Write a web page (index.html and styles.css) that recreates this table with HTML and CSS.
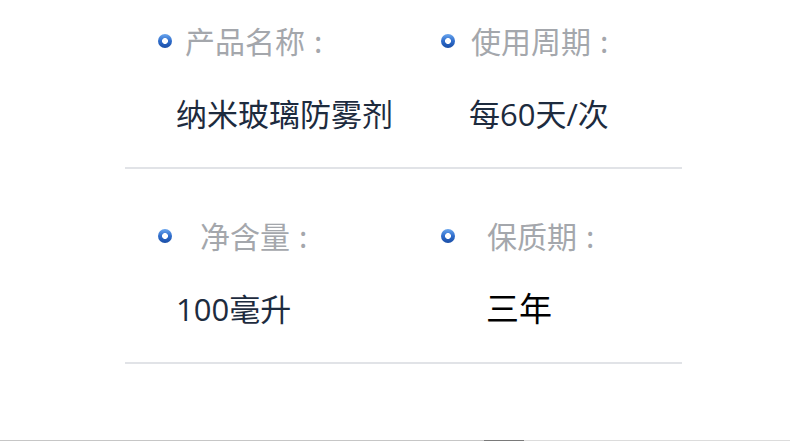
FILE: index.html
```html
<!DOCTYPE html>
<html lang="zh">
<head>
<meta charset="utf-8">
<link rel="stylesheet" href="styles.css">
</head>
<body>
<div class="page">
  <div class="specs">
    <div class="row row-first">
      <div class="cell">
        <div class="label"><span class="dot"></span><span class="label-text">产品名称<span class="colon">:</span></span></div>
        <div class="value">纳米玻璃防雾剂</div>
      </div>
      <div class="cell cell-right">
        <div class="label"><span class="dot"></span><span class="label-text">使用周期<span class="colon">:</span></span></div>
        <div class="value">每60天/次</div>
      </div>
    </div>
    <div class="row">
      <div class="cell">
        <div class="label"><span class="dot"></span><span class="label-text indent">净含量<span class="colon">:</span></span></div>
        <div class="value">100毫升</div>
      </div>
      <div class="cell cell-right">
        <div class="label"><span class="dot"></span><span class="label-text indent">保质期<span class="colon">:</span></span></div>
        <div class="value value-plain">三年</div>
      </div>
    </div>
  </div>
  <div class="bottom-bar">
    <span class="seg seg-a"></span><span class="seg seg-b"></span><span class="seg seg-c"></span>
  </div>
</div>
</body>
</html>
```

FILE: styles.css
```css
html, body {
  margin: 0;
  padding: 0;
  background: #ffffff;
}
.page {
  height: 441px;
  display: flex;
  flex-direction: column;
  font-family: "Noto Sans CJK SC", "Noto Sans", sans-serif;
}
.specs {
  margin-left: 125px;
  width: 557px;
}
.row {
  display: grid;
  grid-template-columns: 283px 1fr;
  padding: 46px 0 33px 34px;
  border-bottom: 2px solid #e1e3e7;
}
.row-first {
  padding-top: 20px;
}
.cell {
  display: flex;
  flex-direction: column;
}
.label {
  display: flex;
  align-items: center;
  height: 40px;
}
.dot {
  width: 14px;
  height: 14px;
  margin-left: -1px;
  margin-top: 2px;
  border-radius: 50%;
  flex: none;
  background:
    radial-gradient(circle at 50% 50%, #ffffff 0 2.6px, rgba(255,255,255,0) 3.3px),
    linear-gradient(180deg, #6aa6ee 0%, #2f6dcc 50%, #1a4ea6 100%);
}
.label-text {
  margin-left: 13px;
  font-size: 30px;
  line-height: 40px;
  color: #a4a7ac;
}
.colon {
  margin-left: 9px;
}
.cell-right .label-text {
  margin-left: 16px;
}
.label-text.indent {
  margin-left: 28px;
}
.cell-right .label-text.indent {
  margin-left: 32px;
}
.value {
  margin-top: 34px;
  height: 40px;
  line-height: 40px;
  font-size: 31px;
  font-family: "Open Sans", "Noto Sans CJK SC", sans-serif;
  color: #1d2b3e;
  padding-left: 17px;
}
.cell-right .value {
  padding-left: 27px;
}
.cell-right .value-plain {
  padding-left: 44px;
  color: #000000;
  font-size: 33px;
}
.bottom-bar {
  margin-top: auto;
  display: flex;
  height: 1px;
}
.seg {
  display: block;
  height: 1px;
}
.seg-a {
  width: 484px;
  background: #c6c6c6;
}
.seg-b {
  width: 40px;
  background: #7a7a7a;
}
.seg-c {
  flex: 1;
  background: #dcdcdc;
}
```
